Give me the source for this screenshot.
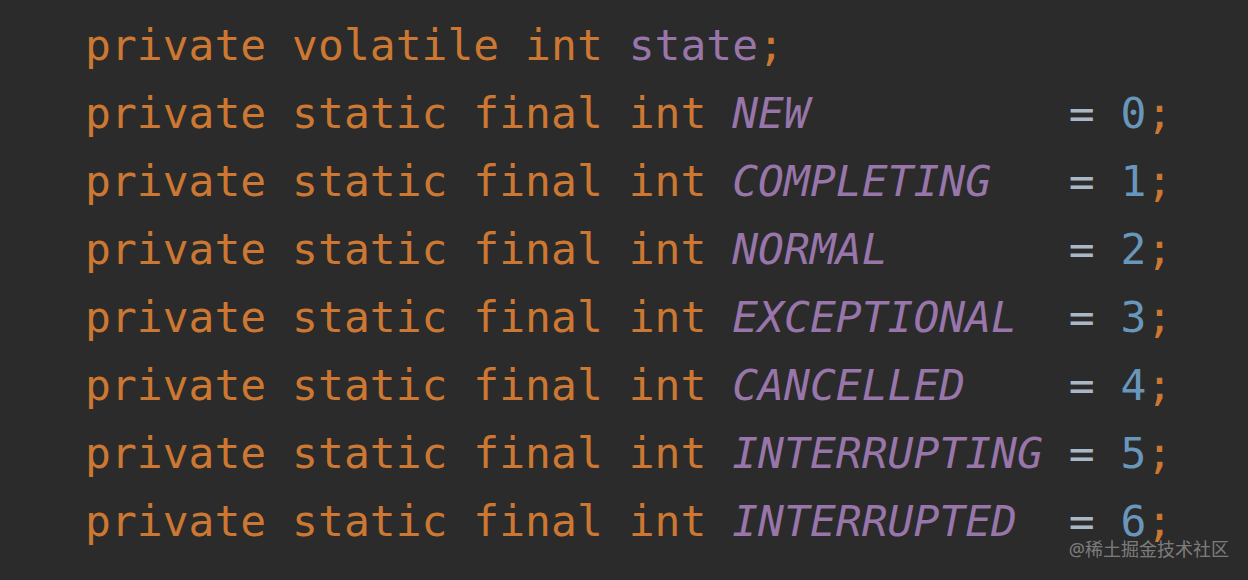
import React from 'react';

const fields = [
    ['NEW', 0],
    ['COMPLETING', 1],
    ['NORMAL', 2],
    ['EXCEPTIONAL', 3],
    ['CANCELLED', 4],
    ['INTERRUPTING', 5],
    ['INTERRUPTED', 6],
];

export default function App() {
    return (
        <div className="relative h-[580px] w-full overflow-hidden bg-[#2b2b2b]">
            <pre
                className="pl-[85px] pt-[11px] text-[43px] leading-[68px] whitespace-pre"
                style={{ fontFamily: '"DejaVu Sans Mono", "Liberation Mono", monospace' }}
            >
                <div>
                    <span className="text-[#cc7832]">private volatile int </span>
                    <span className="text-[#9876aa]">state</span>
                    <span className="text-[#cc7832]">;</span>
                </div>
                {fields.map(([name, value]) => (
                    <div key={name}>
                        <span className="text-[#cc7832]">private static final int </span>
                        <span className="italic text-[#9876aa]">{name.padEnd(13, ' ')}</span>
                        <span className="text-[#a9b7c6]">= </span>
                        <span className="text-[#6897bb]">{value}</span>
                        <span className="text-[#cc7832]">;</span>
                    </div>
                ))}
            </pre>
            {/* watermark sits over the last line, as in the shot */}
            <div
                className="absolute right-[19px] bottom-[17px] text-[18px] text-white/40"
                style={{ fontFamily: '"Noto Sans", "Noto Sans CJK SC", sans-serif' }}
            >
                @稀土掘金技术社区
            </div>
        </div>
    );
}
